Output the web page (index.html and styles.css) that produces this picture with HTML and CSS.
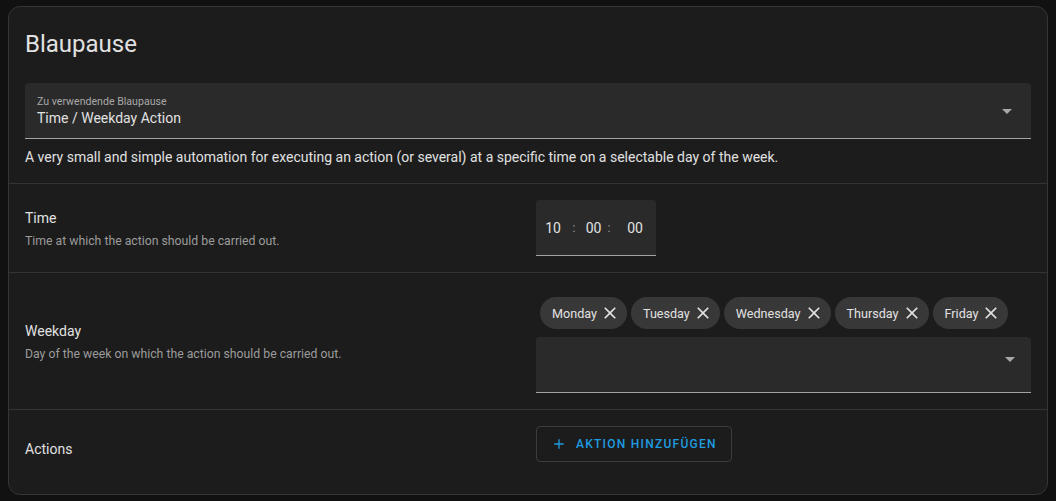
FILE: index.html
```html
<!DOCTYPE html>
<html lang="de">
<head>
<meta charset="utf-8">
<title>Blaupause</title>
<link rel="stylesheet" href="styles.css">
</head>
<body>
<div class="card">
  <h1 class="card-header">Blaupause</h1>
  <div class="select">
    <div class="select-text">
      <div class="select-label">Zu verwendende Blaupause</div>
      <div class="select-value">Time / Weekday Action</div>
    </div>
    <svg class="arrow" viewBox="0 0 24 24"><path d="M7,10L12,15L17,10H7Z"/></svg>
  </div>
  <p class="description">A very small and simple automation for executing an action (or several) at a specific time on a selectable day of the week.</p>

  <div class="row row-time">
    <div class="row-label">
      <div class="heading">Time</div>
      <div class="secondary">Time at which the action should be carried out.</div>
    </div>
    <div class="row-control">
      <div class="time-input">
        <span class="seg seg-h">10</span>
        <span class="colon c1">:</span>
        <span class="seg seg-m">00</span>
        <span class="colon c2">:</span>
        <span class="seg seg-s">00</span>
      </div>
    </div>
  </div>

  <div class="row row-weekday">
    <div class="row-label">
      <div class="heading">Weekday</div>
      <div class="secondary">Day of the week on which the action should be carried out.</div>
    </div>
    <div class="row-control">
      <div class="chips">
        <span class="chip">Monday<svg class="chip-x" viewBox="0 0 24 24"><path d="M19,6.41L17.59,5L12,10.59L6.41,5L5,6.41L10.59,12L5,17.59L6.41,19L12,13.41L17.59,19L19,17.59L13.41,12L19,6.41Z"/></svg></span>
        <span class="chip">Tuesday<svg class="chip-x" viewBox="0 0 24 24"><path d="M19,6.41L17.59,5L12,10.59L6.41,5L5,6.41L10.59,12L5,17.59L6.41,19L12,13.41L17.59,19L19,17.59L13.41,12L19,6.41Z"/></svg></span>
        <span class="chip">Wednesday<svg class="chip-x" viewBox="0 0 24 24"><path d="M19,6.41L17.59,5L12,10.59L6.41,5L5,6.41L10.59,12L5,17.59L6.41,19L12,13.41L17.59,19L19,17.59L13.41,12L19,6.41Z"/></svg></span>
        <span class="chip">Thursday<svg class="chip-x" viewBox="0 0 24 24"><path d="M19,6.41L17.59,5L12,10.59L6.41,5L5,6.41L10.59,12L5,17.59L6.41,19L12,13.41L17.59,19L19,17.59L13.41,12L19,6.41Z"/></svg></span>
        <span class="chip">Friday<svg class="chip-x" viewBox="0 0 24 24"><path d="M19,6.41L17.59,5L12,10.59L6.41,5L5,6.41L10.59,12L5,17.59L6.41,19L12,13.41L17.59,19L19,17.59L13.41,12L19,6.41Z"/></svg></span>
      </div>
      <div class="combo">
        <svg class="arrow" viewBox="0 0 24 24"><path d="M7,10L12,15L17,10H7Z"/></svg>
      </div>
    </div>
  </div>

  <div class="row row-actions">
    <div class="row-label">
      <div class="heading">Actions</div>
    </div>
    <div class="row-control">
      <button class="add-btn" type="button"><svg class="plus" viewBox="0 0 24 24"><path d="M19,13H13V19H11V13H5V11H11V5H13V11H19V13Z"/></svg><span>Aktion hinzufügen</span></button>
    </div>
  </div>
</div>
</body>
</html>
```

FILE: styles.css
```css
* { box-sizing: border-box; }

html, body {
  margin: 0;
  background: #111111;
}

body {
  padding: 6px 8px 0 8px;
  font-family: Roboto, "Noto Sans", "Liberation Sans", sans-serif;
  color: #e1e1e1;
}

.card {
  background: #1c1c1c;
  border: 1px solid #353535;
  border-radius: 12px;
  height: 489px;
  overflow: hidden;
}

.card-header {
  margin: 0;
  padding: 13px 16px 15px;
  font-size: 24px;
  font-weight: 400;
  line-height: 48px;
  color: #e1e1e1;
}

.select {
  margin: 0 16px;
  height: 56px;
  background: #2a2a2a;
  border-radius: 4px 4px 0 0;
  border-bottom: 1px solid #a3a3a3;
  display: flex;
  align-items: center;
  padding: 0 12px 0 12px;
}

.select-text {
  flex: 1;
  align-self: flex-start;
  padding-top: 12px;
}

.select-label {
  font-size: 10.6px;
  line-height: 14px;
  color: #a8a8a8;
}

.select-value {
  font-size: 14px;
  line-height: 18px;
  color: #e1e1e1;
}

.arrow {
  width: 24px;
  height: 24px;
  fill: #a8a8a8;
  flex: none;
}

.description {
  margin: 8px 16px 0;
  padding-bottom: 16px;
  font-size: 14px;
  line-height: 20px;
  color: #e1e1e1;
}

.row {
  border-top: 1px solid #333333;
  display: grid;
  grid-template-columns: 1fr 495px;
  padding: 16px 16px;
  align-items: center;
}

.heading {
  font-size: 14px;
  line-height: 20px;
  color: #e1e1e1;
}

.secondary {
  margin-top: 4px;
  font-size: 12.25px;
  line-height: 18px;
  color: #9b9b9b;
}

.row-time .row-label {
  padding-top: 1px;
}

.time-input {
  width: 120px;
  height: 56px;
  background: #2a2a2a;
  border-radius: 4px 4px 0 0;
  border-bottom: 1px solid #a3a3a3;
  display: flex;
  align-items: center;
  padding-left: 5px;
  font-size: 14px;
  color: #e1e1e1;
}

.seg, .colon {
  text-align: center;
  line-height: 20px;
}

.seg-h { width: 24px; }
.c1 { width: 18px; }
.seg-m { width: 21px; }
.c2 { width: 10px; }
.seg-s { width: 42px; }

.colon {
  color: #9b9b9b;
  font-size: 12px;
}

.row-weekday .row-label {
  padding-top: 2px;
}

.row-weekday .row-control {
  display: flex;
  flex-direction: column;
}

.chips {
  display: flex;
  gap: 4px;
  padding: 8px 0 0 4px;
}

.chip {
  display: inline-flex;
  align-items: center;
  height: 32px;
  border-radius: 16px;
  background: #383838;
  padding: 0 7px 0 12px;
  font-size: 12.6px;
  color: #e1e1e1;
  white-space: nowrap;
}

.chip-x {
  width: 20px;
  height: 20px;
  margin-left: 3px;
  fill: #e1e1e1;
}

.combo {
  margin-top: 8px;
  height: 56px;
  background: #2a2a2a;
  border-radius: 4px 4px 0 0;
  border-bottom: 1px solid #a3a3a3;
  display: flex;
  justify-content: flex-end;
  align-items: flex-start;
  padding: 10px 9px 0 0;
}

.row-actions {
  padding-bottom: 32px;
}

.row-actions .row-label {
  padding-top: 10px;
}

.add-btn {
  display: inline-flex;
  align-items: center;
  height: 36px;
  width: 196px;
  padding: 0 0 0 14px;
  background: transparent;
  border: 1px solid #3c3c3c;
  border-radius: 4px;
  color: #1f9be0;
  font-family: Roboto, "Noto Sans", "Liberation Sans", sans-serif;
  font-size: 12px;
  font-weight: 500;
  letter-spacing: 1.25px;
  text-transform: uppercase;
  cursor: pointer;
}

.plus {
  width: 16px;
  height: 16px;
  fill: #1f9be0;
  margin-right: 9px;
}
```
